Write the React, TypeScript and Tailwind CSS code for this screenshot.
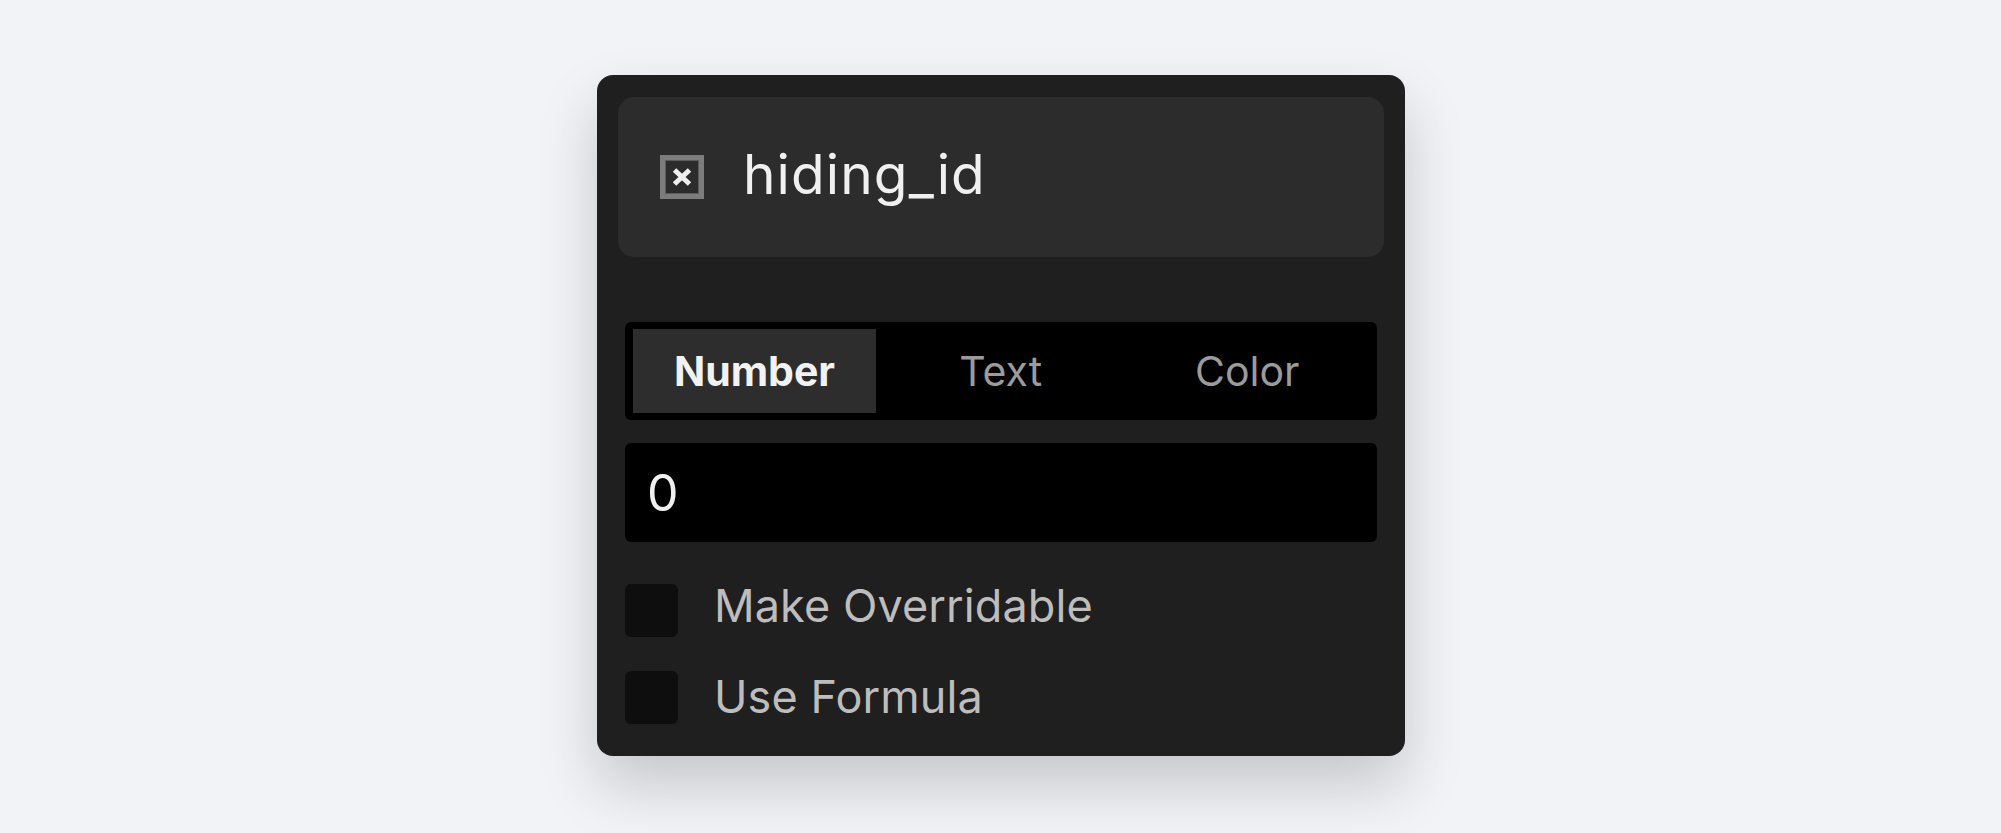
const font = "font-['Inter',sans-serif]";

const HidingIcon = () => (
  <svg width="44" height="44" viewBox="0 0 44 44" fill="none" className="shrink-0">
    <rect x="2.5" y="2.5" width="39" height="39" stroke="#7c7c7c" strokeWidth="5" />
    <rect x="5.5" y="5.5" width="33" height="33" stroke="#5c5c5c" strokeWidth="1" />
    <path d="M14.5 15L29.5 29M29.5 15L14.5 29" stroke="#efefef" strokeWidth="5" />
  </svg>
);

const Tab = ({ label, active }: { label: string; active?: boolean }) => {
  return (
    <div
      className={
        active
          ? "w-[243px] flex items-center justify-center pt-px bg-[#2d2d2d] text-[#f2f2f2] font-bold text-[41px]"
          : "flex-1 flex items-center justify-center pt-px pl-[3px] text-[#9b9b9b] text-[41px]"
      }
    >
      {label}
    </div>
  );
};

const CheckRow = ({ label, className }: { label: string; className: string }) => {
  return (
    <div className="flex items-center h-[53px]">
      <div className="w-[53px] h-[53px] rounded-md bg-[#0e0e0e]" />
      <span className={`ml-[36px] text-[45px] tracking-[0.1px] text-[#bdbdbd] ${className}`}>{label}</span>
    </div>
  );
};

export default function App() {
  return (
    <div className={`min-h-[833px] bg-[#f1f3f7] flex justify-center pt-[75px] pl-px ${font}`}>
      <div className="w-[808px] h-[681px] rounded-2xl bg-[#1f1f1f] px-[21px] pt-[22px] shadow-[0_30px_60px_rgba(0,0,0,0.18)]">
        <div className="h-[160px] rounded-2xl bg-[#2c2c2c] flex items-center pl-[42px]">
          <HidingIcon />
          <span className="ml-[39px] -mt-[6px] text-[55px] tracking-[1.1px] text-[#f0f0f0]">hiding_id</span>
        </div>

        <div className="mx-[7px] mt-[65px]">
          <div className="h-[98px] rounded-md bg-black flex px-[8px] py-[7px]">
            <Tab label="Number" active />
            <Tab label="Text" />
            <Tab label="Color" />
          </div>
          <div className="mt-[23px] h-[99px] rounded-md bg-black flex items-center pl-[22px] pt-[2px] text-[50px] text-[#f0f0f0]">
            0
          </div>
          <div className="mt-[42px] flex flex-col gap-[34px]">
            <CheckRow label="Make Overridable" className="-mt-[10px]" />
            <CheckRow label="Use Formula" className="-mt-[2px]" />
          </div>
        </div>
      </div>
    </div>
  );
}
